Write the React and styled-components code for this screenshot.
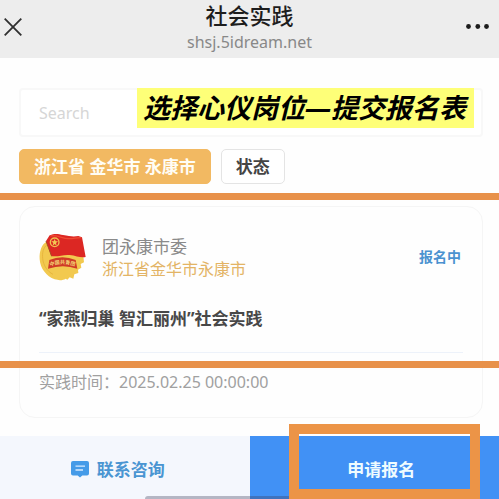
import React from "react";
import styled, { createGlobalStyle } from "styled-components";

const GlobalStyle = createGlobalStyle`
  * {
    box-sizing: border-box;
  }
  body {
    margin: 0;
    background: #fefefe;
    font-family: "Noto Sans", "Noto Sans CJK SC", sans-serif;
  }
  button, input {
    font-family: inherit;
  }
`;

const StyledPage = styled.div`
  display: flex;
  flex-direction: column;
  min-height: 100vh;
  overflow: hidden;
`;

const StyledHeader = styled.header`
  display: grid;
  grid-template-columns: 40px 1fr 40px;
  align-items: center;
  height: 58px;
  padding-bottom: 4px;
  background: #ededed;
  text-align: center;
`;

const StyledIconButton = styled.button`
  display: flex;
  padding: 0 4px;
  border: 0;
  background: none;
`;

const StyledTitle = styled.h1`
  margin: 0;
  font-size: 22px;
  font-weight: 500;
  line-height: 30px;
  color: #1d1d1d;
`;

const StyledUrl = styled.p`
  margin: 0;
  font-size: 16px;
  line-height: 24px;
  color: #888;
`;

const StyledMain = styled.main`
  display: flex;
  flex-direction: column;
  padding: 30px 16px 18px 19px;
`;

const StyledSearch = styled.div`
  position: relative;
`;

const StyledInput = styled.input`
  display: block;
  width: 100%;
  height: 49px;
  padding: 0 18px;
  border: 2px solid #f8f8f8;
  border-radius: 4px;
  background: #fff;
  font-size: 16px;
  &::placeholder {
    color: #d6d6d6;
    opacity: 1;
  }
`;

const StyledCaption = styled.strong`
  position: absolute;
  top: 0;
  right: 9px;
  padding: 0 8px 0 6px;
  background: #feff78;
  font-size: 27px;
  font-style: italic;
  font-weight: 700;
  line-height: 40px;
  white-space: nowrap;
  color: #000;
`;

const StyledFilters = styled.div`
  display: flex;
  gap: 10px;
  margin: 12px 0 22px;
`;

const StyledFilter = styled.button`
  height: 35px;
  padding: 0 14px;
  border: 1px solid ${(props) => (props.$active ? "#f2b962" : "#e4e4e4")};
  border-radius: 5px;
  background: ${(props) => (props.$active ? "#f2b962" : "#fff")};
  font-size: 17px;
  font-weight: 700;
  line-height: 24px;
  color: ${(props) => (props.$active ? "#fffdf5" : "#444")};
`;

const StyledFocus = styled.section`
  position: relative;
`;

const StyledMarker = styled.div`
  position: absolute;
  left: -19px;
  right: -16px;
  height: 7px;
  top: ${(props) => props.$top};
  background: #e8914a;
`;

const StyledCard = styled.article`
  display: flex;
  flex-direction: column;
  padding: 26px 19px 22px;
  border: 1px solid #f5f5f5;
  border-radius: 16px;
  background: #fefefe;
`;

const StyledOrg = styled.div`
  display: flex;
  align-items: center;
  gap: 16px;
`;

const StyledOrgText = styled.div`
  flex: 1;
`;

const StyledOrgName = styled.p`
  margin: 0;
  font-size: 17px;
  line-height: 22px;
  color: #8a8a8a;
`;

const StyledRegion = styled.p`
  margin: 0;
  font-size: 16px;
  line-height: 22px;
  color: #e3b465;
`;

const StyledStatus = styled.span`
  padding: 0 2px 4px 0;
  font-size: 14px;
  font-weight: 700;
  color: #4a92d0;
`;

const StyledProject = styled.h2`
  margin: 0;
  padding: 24px 0 20px;
  border-bottom: 1px solid #edf2fa;
  font-size: 17px;
  font-weight: 700;
  line-height: 26px;
  color: #484848;
`;

const StyledTime = styled.p`
  margin: 0;
  padding-top: 16px;
  font-size: 16px;
  line-height: 26px;
  color: #a0a0a0;
`;

const StyledFooter = styled.footer`
  position: relative;
  display: grid;
  grid-template-columns: 1fr 1fr;
  height: 63px;
  margin-top: auto;
`;

const StyledAction = styled.button`
  display: flex;
  align-items: center;
  justify-content: center;
  gap: 8px;
  border: 0;
  padding: ${(props) => (props.$primary ? "2px 0 0 14px" : "2px 14px 0 0")};
  background: ${(props) => (props.$primary ? "#4191f5" : "#f4f7fd")};
  font-size: 17px;
  font-weight: 700;
  color: ${(props) => (props.$primary ? "#effcff" : "#4a95d2")};
`;

const StyledHomeBar = styled.div`
  position: absolute;
  bottom: 0;
  left: 29%;
  width: 42%;
  height: 3px;
  border-radius: 3px 3px 0 0;
  background: rgba(60, 60, 90, 0.35);
`;

const StyledFrame = styled.div`
  position: absolute;
  top: -12px;
  right: 19px;
  bottom: 0;
  width: 191px;
  border: 10px solid #ec9447;
  pointer-events: none;
`;

const filters = [
  { name: "浙江省 金华市 永康市", active: true },
  { name: "状态", active: false },
];

function CloseIcon() {
  return (
    <svg width="18" height="20" viewBox="0 0 18 20" aria-hidden="true">
      <path d="M0.7 1.7 17.3 18.3M17.3 1.7 0.7 18.3" stroke="#303030" strokeWidth="1.8" />
    </svg>
  );
}

function MoreIcon() {
  return (
    <svg width="26" height="8" viewBox="0 0 26 8" fill="#1c1c1c" aria-hidden="true">
      <circle cx="5.5" cy="3.5" r="2.4" />
      <circle cx="14.8" cy="3.5" r="2.4" />
      <circle cx="23.5" cy="3.5" r="2.4" />
    </svg>
  );
}

function ChatIcon() {
  return (
    <svg width="18" height="18" viewBox="0 0 18 18" aria-hidden="true">
      <path
        d="M2 1h14a2 2 0 0 1 2 2v10.5a2 2 0 0 1-2 2h-4.7L9 17.6l-2.3-2.1H2a2 2 0 0 1-2-2V3a2 2 0 0 1 2-2z"
        fill="#459be8"
      />
      <path d="M4.5 6.2h9.5M4.5 10h7.5" stroke="#d7ecff" strokeWidth="1.3" />
    </svg>
  );
}

function Emblem() {
  return (
    <svg width="47" height="49" viewBox="54 36 141 147" role="img" aria-label="团徽">
      <path
        d="M78 61C61 71 55 91 56 115c2 28 20 51 45 60 14 4 25 3 33-2l5 3 7-7 11 4 3-13 12-4-1-10 10-6-2-11 10-5-3-28-50-50z"
        fill="#f2c94f"
      />
      <path d="M79 70C67 80 63 95 65 112c2 22 14 39 31 48" fill="none" stroke="#e7b63d" strokeWidth="3" />
      <path
        d="M75 60 86 43c16-7 26-4 40-1 20 4 32 6 46 3l11 4 11 59c-14 4-28-4-48-6-22-2-35 7-55 3z"
        fill="#dc2723"
      />
      <path d="M88 45c20-5 34 8 55 8 14 1 25-4 37-3" fill="none" stroke="#ef4a34" strokeWidth="4" />
      <path d="m75 60 17 46" stroke="#a94a22" strokeWidth="3" />
      <circle cx="101" cy="64" r="13" fill="none" stroke="#efbf50" strokeWidth="4" />
      <path d="m101 54 3 7h7l-6 5 2 8-6-5-6 5 2-8-6-5h7z" fill="#f4ca55" />
      <path d="M85 117q39-17 79 0l5 26q-43-15-88 0z" fill="#cf3b27" />
      <path id="ribbon" d="M88 136q37-14 76 0" fill="none" />
      <text fontFamily="Noto Sans CJK SC, sans-serif" fontSize="15" fontWeight="700" fill="#f5d777">
        <textPath href="#ribbon">中国共青团</textPath>
      </text>
    </svg>
  );
}

function Header() {
  return (
    <StyledHeader>
      <StyledIconButton aria-label="关闭">
        <CloseIcon />
      </StyledIconButton>
      <div>
        <StyledTitle>社会实践</StyledTitle>
        <StyledUrl>shsj.5idream.net</StyledUrl>
      </div>
      <StyledIconButton aria-label="更多">
        <MoreIcon />
      </StyledIconButton>
    </StyledHeader>
  );
}

function ProjectCard() {
  return (
    <StyledCard>
      <StyledOrg>
        <Emblem />
        <StyledOrgText>
          <StyledOrgName>团永康市委</StyledOrgName>
          <StyledRegion>浙江省金华市永康市</StyledRegion>
        </StyledOrgText>
        <StyledStatus>报名中</StyledStatus>
      </StyledOrg>
      <StyledProject>“家燕归巢 智汇丽州”社会实践</StyledProject>
      <StyledTime>实践时间：2025.02.25 00:00:00</StyledTime>
    </StyledCard>
  );
}

function App() {
  return (
    <StyledPage lang="zh-CN">
      <GlobalStyle />
      <Header />
      <StyledMain>
        <StyledSearch>
          <StyledInput type="search" placeholder="Search" aria-label="Search" />
          <StyledCaption>选择心仪岗位—提交报名表</StyledCaption>
        </StyledSearch>
        <StyledFilters>
          {filters.map((filter) => (
            <StyledFilter key={filter.name} $active={filter.active}>
              {filter.name}
            </StyledFilter>
          ))}
        </StyledFilters>
        <StyledFocus>
          <ProjectCard />
          <StyledMarker $top="-13px" />
          <StyledMarker $top="155px" />
        </StyledFocus>
      </StyledMain>
      <StyledFooter>
        <StyledAction>
          <ChatIcon />
          联系咨询
        </StyledAction>
        <StyledAction $primary>申请报名</StyledAction>
        <StyledHomeBar />
        <StyledFrame />
      </StyledFooter>
    </StyledPage>
  );
}

export default App;
